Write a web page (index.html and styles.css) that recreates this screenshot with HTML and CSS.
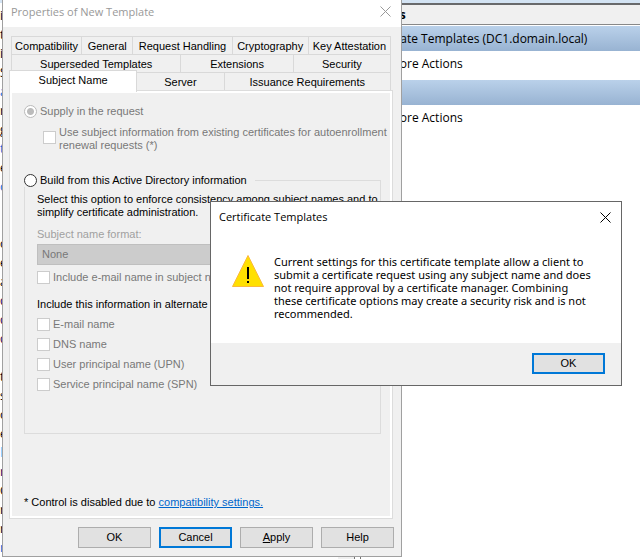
FILE: index.html
```html
<!DOCTYPE html>
<html lang="en">
<head>
<meta charset="UTF-8">
<title>Properties of New Template</title>
<link rel="stylesheet" href="styles.css">
</head>
<body>
    <div class="console">
        <div class="template-list">
            <span>i</span><span>t</span><span>i</span><span>S</span><span class="blue">a</span><span>r</span><span>g</span><span class="blue">t</span><span>e</span><span class="blue">o</span><span></span><span></span><span>o</span><span>e</span><span>a</span><span class="purple">q</span><span class="purple">q</span><span class="purple">q</span><span></span><span>t</span><span>s</span><span>o</span><span>e</span><span class="sky">l</span><span class="purple">r</span><span>C</span><span>r</span><span>r</span><span class="blue">n</span>
        </div>
        <div class="scrollbar"></div>
        <aside class="actions">
            <h2 class="actions-title">Actions</h2>
            <h3 class="actions-group">Certificate Templates (DC1.domain.local)</h3>
            <a class="actions-item" href="#">More Actions</a>
            <h3 class="actions-group"></h3>
            <a class="actions-item" href="#">More Actions</a>
        </aside>
    </div>

    <section class="window properties">
        <header class="titlebar">
            <h1 class="title">Properties of New Template</h1>
            <button class="close" aria-label="Close"><svg viewBox="0 0 11 11"><path d="M.5 .5l10 10M10.5 .5l-10 10"/></svg></button>
        </header>

        <div class="sheet">
            <nav class="tabs">
                <div class="tab-row first">
                    <button class="tab">Compatibility</button>
                    <button class="tab">General</button>
                    <button class="tab">Request Handling</button>
                    <button class="tab">Cryptography</button>
                    <button class="tab">Key Attestation</button>
                </div>
                <div class="tab-row second">
                    <button class="tab">Superseded Templates</button>
                    <button class="tab">Extensions</button>
                    <button class="tab">Security</button>
                </div>
                <div class="tab-row third">
                    <button class="tab active">Subject Name</button>
                    <button class="tab">Server</button>
                    <button class="tab">Issuance Requirements</button>
                </div>
            </nav>

            <div class="page">
                <label class="option disabled"><input type="radio" name="source" checked disabled>Supply in the request</label>
                <label class="option disabled nested"><input type="checkbox" disabled><span>Use subject information from existing certificates for autoenrollment renewal requests (*)</span></label>

                <fieldset class="group">
                    <legend><label class="option"><input type="radio" name="build">Build from this Active Directory information</label></legend>
                    <p class="hint">Select this option to enforce consistency among subject names and to simplify certificate administration.</p>
                    <label class="format-label" for="format">Subject name format:</label>
                    <select class="format" id="format" disabled><option>None</option></select>
                    <label class="option disabled"><input type="checkbox" disabled>Include e-mail name in subject name</label>
                    <p class="alternate">Include this information in alternate subject name:</p>
                    <div class="checks">
                        <label class="option disabled"><input type="checkbox" disabled>E-mail name</label>
                        <label class="option disabled"><input type="checkbox" disabled>DNS name</label>
                        <label class="option disabled"><input type="checkbox" disabled>User principal name (UPN)</label>
                        <label class="option disabled"><input type="checkbox" disabled>Service principal name (SPN)</label>
                    </div>
                </fieldset>

                <p class="note">* Control is disabled due to <a href="#">compatibility settings.</a></p>
            </div>
        </div>

        <footer class="buttons">
            <button class="button">OK</button>
            <button class="button default">Cancel</button>
            <button class="button"><u>A</u>pply</button>
            <button class="button">Help</button>
        </footer>
    </section>

    <section class="window message" role="alertdialog" aria-labelledby="message-title">
        <header class="titlebar">
            <h1 class="title" id="message-title">Certificate Templates</h1>
            <button class="close" aria-label="Close"><svg viewBox="0 0 11 11"><path d="M.5 .5l10 10M10.5 .5l-10 10"/></svg></button>
        </header>
        <div class="message-body">
            <svg class="warning" viewBox="0 0 32 32">
                <path d="M16 .5L31.5 31.5H.5z" fill="#ffe000" stroke="#fbb93c"/>
                <path d="M15 12h2v12h-2zM15 26h2v2h-2z" fill="#000"/>
            </svg>
            <p class="message-text">Current settings for this certificate template allow a client to submit a certificate request using any subject name and does not require approval by a certificate manager. Combining these certificate options may create a security risk and is not recommended.</p>
        </div>
        <footer class="message-footer">
            <button class="button default">OK</button>
        </footer>
    </section>
</body>
</html>
```

FILE: styles.css
```css
* {
    margin: 0;
    padding: 0;
    box-sizing: border-box;
}

body {
    min-height: 100vh;
    position: relative;
    overflow: hidden;
    background: #fff;
    color: #000;
    font: 11px/13px "Liberation Sans", Arial, sans-serif;
}

button, select {
    font: inherit;
    color: inherit;
}

/* console behind the dialogs */
.console {
    display: flex;
    height: 100vh;
    overflow: hidden;
    border-top: 3px solid #d3e3f3;
    font: 12px/19px "Open Sans", sans-serif;
}

.template-list {
    flex: 1;
    display: flex;
    flex-direction: column;
    padding-top: 3px;
}

.template-list span {
    flex: none;
    height: 19px;
}

.blue {
    color: #0a64d8;
}

.purple {
    color: #2a0050;
}

.sky {
    color: #6cc8ff;
}

.scrollbar {
    width: 17px;
    margin-right: 5px;
    background: #f0f0f0;
    border-right: 1px solid #777;
}

.actions {
    flex: 0 0 280px;
    border-top: 2px solid #68696b;
    border-left: 1px solid #777;
}

.actions-title {
    height: 20px;
    background: #f0f0f0;
    border-bottom: 1px solid #888;
    font-size: 12px;
}

.actions-group {
    height: 25px;
    margin-top: 1px;
    line-height: 25px;
    background: linear-gradient(#bad1ea, #98b3d2);
    font-size: 12px;
    font-weight: 400;
}

.actions-item {
    display: block;
    padding: 3px 0 6px 28px;
    color: #000;
    text-decoration: none;
}

/* windows */
.window {
    position: absolute;
    background: #f0f0f0;
    border: 1px solid #a0a0a0;
}

.titlebar {
    display: flex;
    align-items: center;
    justify-content: space-between;
    background: #fff;
}

.title {
    font: 11px/16px "Open Sans", sans-serif;
}

.close {
    width: 11px;
    height: 11px;
    background: none;
    border: 0;
}

.close svg {
    display: block;
    fill: none;
    stroke: currentColor;
}

.button {
    width: 73px;
    height: 21px;
    background: #e1e1e1;
    border: 1px solid #adadad;
}

.button.default {
    border: 2px solid #0078d7;
}

.properties {
    top: 0;
    left: 2px;
    width: 400px;
    border-top: 0;
}

.properties .titlebar {
    height: 27px;
    padding: 0 10px 4px 8px;
    color: #999;
}

.sheet {
    padding: 9px 8px 8px 6px;
}

.tabs {
    padding: 0 2px;
}

.tab-row {
    display: grid;
    height: 18px;
}

.tab-row.first {
    grid-template-columns: 71fr 51fr 99fr 76fr 82fr;
}

.tab-row.second {
    grid-template-columns: 170fr 112fr 97fr;
}

.tab-row.third {
    grid-template-columns: 126fr 87fr 166fr;
}

.tab {
    padding-top: 1px;
    background: #f0f0f0;
    border: 1px solid #d9d9d9;
    border-width: 1px 1px 0 0;
    white-space: nowrap;
}

.tab:first-child {
    border-left-width: 1px;
}

.tab.active {
    position: relative;
    z-index: 1;
    margin: -2px 0 -2px -2px;
    padding-bottom: 4px;
    background: #fff;
}

.page {
    padding: 14px 5px 9px 14px;
    border: 1px solid #dcdcdc;
    outline: 2px solid #fff;
    outline-offset: -3px;
}

.option {
    display: flex;
    align-items: center;
    gap: 3px;
}

.disabled {
    color: #787878;
}

input {
    appearance: none;
    flex: none;
    width: 13px;
    height: 13px;
    background: #fff;
    border: 1px solid #ccc;
}

input[type="radio"] {
    border-radius: 50%;
    border-color: #333;
}

input[type="radio"]:disabled {
    border-color: #bbb;
}

input[type="radio"]:checked {
    background: radial-gradient(#bbb 3px, #fff 4px);
}

.nested {
    align-items: flex-start;
    margin: 8px 0 0 19px;
}

.nested input {
    margin-top: 5px;
}

.group {
    margin: 22px 6px 0 0;
    min-height: 260px;
    padding: 6px 0 6px 12px;
    border: 1px solid #dcdcdc;
}

.group legend {
    margin-left: -13px;
    padding-right: 8px;
}

.hint {
    margin-bottom: 9px;
}

.format-label {
    display: block;
    margin-bottom: 3px;
    color: #a0a0a0;
}

.format {
    appearance: none;
    width: 95%;
    height: 21px;
    margin-bottom: 6px;
    padding-left: 4px;
    background: #ccc;
    border: 1px solid #bfbfbf;
    color: #787878;
    opacity: 1;
}

.alternate {
    margin: 14px 0 7px;
}

.checks {
    display: grid;
    gap: 7px;
}

.note {
    margin-top: 62px;
}

.note a {
    color: #0066cc;
}

.buttons {
    display: flex;
    justify-content: flex-end;
    gap: 8px;
    padding: 0 7px 8px;
}

.message {
    top: 201px;
    left: 210px;
    width: 412px;
    border-color: #666;
}

.message .titlebar {
    height: 30px;
    padding: 0 10px 0 8px;
}

.message-body {
    display: flex;
    gap: 10px;
    padding: 23px 30px 23px 21px;
    background: #fff;
}

.warning {
    flex: none;
    width: 32px;
    height: 32px;
}

.message-text {
    font: 11px/13px "Noto Sans", sans-serif;
}

.message-footer {
    display: flex;
    justify-content: flex-end;
    padding: 10px 16px 11px;
}
```
